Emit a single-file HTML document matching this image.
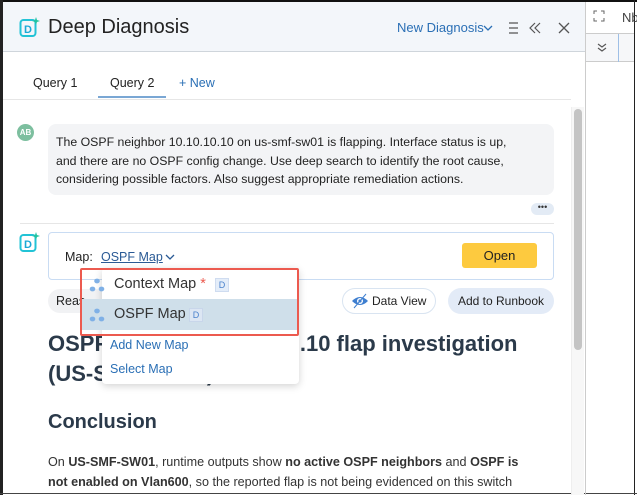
<!DOCTYPE html>
<html><head><style>
*{box-sizing:border-box;margin:0;padding:0}
body{width:637px;height:495px;overflow:hidden;background:#fff;font-family:"Liberation Sans",sans-serif;position:relative}
.a{position:absolute;white-space:nowrap}
.ui{font-family:"Liberation Sans",sans-serif}
</style></head><body>
<div class="a" style="left:0;top:0;width:637px;height:2px;background:#111"></div>
<div class="a" style="left:0;top:0;width:3px;height:495px;background:#222"></div>
<div class="a" style="left:634px;top:0;width:1px;height:495px;background:#222"></div>
<div class="a" style="left:0;top:493px;width:637px;height:1px;background:#444"></div>
<!-- header -->
<div class="a" style="left:3px;top:2px;width:582px;height:50px;background:#f3f6fa;border-bottom:1px solid #cfd5db"></div>
<svg class="a" style="left:19px;top:16px" width="22" height="22" viewBox="0 0 22 22"><rect x="1.5" y="4" width="15" height="16" rx="3" fill="none" stroke="#22c3d6" stroke-width="2"/><text x="5" y="17" font-size="11" font-weight="bold" fill="#1aa9d6" font-family="Liberation Sans">D</text><path d="M17 1 L18 4 L21 5 L18 6 L17 9 L16 6 L13 5 L16 4Z" fill="#22c3a0"/></svg>
<div class="a ui" style="left:48px;top:16px;font-size:20px;color:#222">Deep Diagnosis</div>
<div class="a ui" style="left:397px;top:20px;font-size:13px;color:#2a6fb5">New Diagnosis</div>
<svg class="a" style="left:483px;top:24px" width="10" height="8" viewBox="0 0 10 8"><path d="M1 2 L5 6 L9 2" fill="none" stroke="#2a6fb5" stroke-width="1.3"/></svg>
<svg class="a" style="left:506px;top:21px" width="64" height="14" viewBox="0 0 64 14"><path d="M3 2H12M3 7H12M3 12H12" stroke="#555" stroke-width="1.2"/><path d="M29 2L24 7L29 12M34 2L29 7L34 12" fill="none" stroke="#555" stroke-width="1.2"/><path d="M53 2L63 12M63 2L53 12" stroke="#555" stroke-width="1.3"/></svg>
<!-- right panel -->
<div class="a" style="left:585px;top:2px;width:1px;height:493px;background:#ccc"></div>
<div class="a" style="left:586px;top:33px;width:48px;height:29px;background:#f6f7f9;border-top:1px solid #ccc;border-bottom:1px solid #ccc"></div>
<svg class="a" style="left:593px;top:10px" width="12" height="12" viewBox="0 0 12 12"><path d="M1 4V1H4M8 1H11V4M11 8V11H8M4 11H1V8" fill="none" stroke="#666" stroke-width="1"/></svg>
<div class="a" style="left:622px;top:10px;font-size:13px;color:#444">Nb</div>
<svg class="a" style="left:596px;top:43px" width="12" height="10" viewBox="0 0 12 10"><path d="M2 1L6 4L10 1M2 5L6 8L10 5" fill="none" stroke="#555" stroke-width="1.1"/></svg>
<div class="a" style="left:618px;top:34px;width:1px;height:28px;background:#9ebfe6"></div>
<!-- tabs -->
<div class="a ui" style="left:33px;top:76px;font-size:12.5px;color:#222">Query 1</div>
<div class="a ui" style="left:110px;top:76px;font-size:12.5px;color:#222">Query 2</div>
<div class="a ui" style="left:179px;top:76px;font-size:12.5px;color:#2a6fb5">+ New</div>
<div class="a" style="left:98px;top:96px;width:68px;height:2px;background:#7aa7d4"></div>
<div class="a" style="left:3px;top:99px;width:568px;height:1px;background:#e6e6e6"></div>
<!-- scrollbar -->
<div class="a" style="left:571px;top:107px;width:13px;height:388px;background:#f7f7f7;border-left:1px solid #eee"></div>
<div class="a" style="left:574px;top:109px;width:8px;height:241px;background:#c4c4c4;border-radius:4px"></div>
<!-- user msg -->
<div class="a" style="left:17px;top:124px;width:17px;height:17px;border-radius:50%;background:#7dbf9f;color:#fff;font-size:8px;font-weight:bold;text-align:center;line-height:17px">AB</div>
<div class="a" style="left:48px;top:124px;width:506px;height:71px;background:#f3f4f6;border-radius:8px"></div>
<div class="a" style="left:56px;top:133px;font-size:12.3px;line-height:18.7px;color:#222">The OSPF neighbor 10.10.10.10 on us-smf-sw01 is flapping. Interface status is up,<br>and there are no OSPF config change. Use deep search to identify the root cause,<br>considering possible factors. Also suggest appropriate remediation actions.</div>
<div class="a" style="left:531px;top:203px;width:23px;height:12px;background:#e3ebf5;border-radius:6px;font-size:9px;text-align:center;line-height:8px;color:#333">•••</div>
<div class="a" style="left:20px;top:223px;width:534px;height:1px;background:#e6e6e6"></div>
<!-- bot -->
<svg class="a" style="left:19px;top:231px" width="22" height="22" viewBox="0 0 22 22"><rect x="1.5" y="4" width="15" height="16" rx="3" fill="none" stroke="#22c3d6" stroke-width="2"/><text x="5" y="17" font-size="11" font-weight="bold" fill="#1aa9d6" font-family="Liberation Sans">D</text><path d="M17 1 L18 4 L21 5 L18 6 L17 9 L16 6 L13 5 L16 4Z" fill="#22c3a0"/></svg>
<div class="a" style="left:48px;top:232px;width:506px;height:48px;border:1px solid #c9dcf3;border-radius:4px"></div>
<div class="a ui" style="left:65px;top:250px;font-size:12.5px;color:#222">Map:</div>
<div class="a ui" style="left:101px;top:250px;font-size:12.5px;color:#2a5a95;text-decoration:underline">OSPF Map</div>
<svg class="a" style="left:165px;top:253px" width="10" height="8" viewBox="0 0 10 8"><path d="M1 2 L5 6 L9 2" fill="none" stroke="#2a5a95" stroke-width="1.3"/></svg>
<div class="a ui" style="left:462px;top:243px;width:75px;height:25px;background:#fdca3f;border-radius:3px;font-size:13px;text-align:center;line-height:25px;color:#222">Open</div>
<div class="a ui" style="left:48px;top:289px;width:60px;height:24px;background:#f1f2f4;border-radius:12px;font-size:12.5px;line-height:24px;padding-left:8px;color:#222">Reas</div>
<div class="a ui" style="left:342px;top:288px;width:94px;height:26px;border:1px solid #d9e4f1;border-radius:13px;font-size:12px;line-height:24px;padding-left:29px;color:#222">Data View</div>
<svg class="a" style="left:351px;top:293px" width="18" height="16" viewBox="0 0 18 16"><path d="M1 8 Q9 0 17 8 Q9 16 1 8Z" fill="#3f7fd0"/><circle cx="9" cy="8" r="3" fill="#fff"/><circle cx="9" cy="8" r="1.6" fill="#3f7fd0"/><line x1="3" y1="15" x2="15" y2="1" stroke="#3f7fd0" stroke-width="1"/></svg>
<div class="a ui" style="left:448px;top:288px;width:106px;height:26px;background:#e3ebf7;border-radius:13px;font-size:12px;line-height:26px;text-align:center;color:#222">Add to Runbook</div>
<!-- content -->
<div class="a ui" style="left:48px;top:329px;font-size:22px;font-weight:bold;color:#2b3a4a;line-height:30px">OSPF neighbor 10.10.10.10 flap investigation<br>(US-SMF-SW01)</div>
<div class="a ui" style="left:48px;top:411px;font-size:20px;font-weight:bold;color:#2b3a4a">Conclusion</div>
<div class="a ui" style="left:48px;top:452px;font-size:12.6px;line-height:20px;color:#333">On <b>US-SMF-SW01</b>, runtime outputs show <b>no active OSPF neighbors</b> and <b>OSPF is</b><br><b>not enabled on Vlan600</b>, so the reported flap is not being evidenced on this switch</div>
<!-- dropdown -->
<div class="a" style="left:102px;top:268px;width:197px;height:116px;background:#fff;border-radius:4px;box-shadow:0 2px 8px rgba(0,0,0,.18)"></div>
<div class="a" style="left:81px;top:299px;width:216px;height:31px;background:#cfdfea"></div>
<div class="a" style="left:80px;top:268px;width:219px;height:68px;border:2px solid #ec5a4f;border-radius:2px"></div>
<svg class="a" style="left:89px;top:277px" width="16" height="16" viewBox="0 0 16 16"><ellipse cx="8" cy="4" rx="2.8" ry="2.4" fill="#7fb0e6"/><ellipse cx="3.5" cy="12" rx="2.8" ry="2.4" fill="#7fb0e6"/><ellipse cx="12.5" cy="12" rx="2.8" ry="2.4" fill="#7fb0e6"/></svg>
<svg class="a" style="left:89px;top:307px" width="16" height="16" viewBox="0 0 16 16"><ellipse cx="8" cy="4" rx="2.8" ry="2.4" fill="#7fb0e6"/><ellipse cx="3.5" cy="12" rx="2.8" ry="2.4" fill="#7fb0e6"/><ellipse cx="12.5" cy="12" rx="2.8" ry="2.4" fill="#7fb0e6"/></svg>
<div class="a ui" style="left:114px;top:276px;font-size:14.5px;color:#333">Context Map <span style="color:#ec5a4f">*</span></div>
<div class="a" style="left:215px;top:278px;width:14px;height:14px;background:#e4edf9;border:1px solid #cfdcf0;font-size:9px;color:#4a82cc;text-align:center;line-height:12px">D</div>
<div class="a ui" style="left:114px;top:306px;font-size:14.5px;color:#333">OSPF Map</div>
<div class="a" style="left:189px;top:308px;width:14px;height:14px;background:#dce6f3;border:1px solid #c8d6ea;font-size:9px;color:#4a82cc;text-align:center;line-height:12px">D</div>
<div class="a ui" style="left:110px;top:338px;font-size:12.5px;color:#2a6fb5">Add New Map</div>
<div class="a ui" style="left:110px;top:362px;font-size:12.5px;color:#2a6fb5">Select Map</div>
</body></html>
